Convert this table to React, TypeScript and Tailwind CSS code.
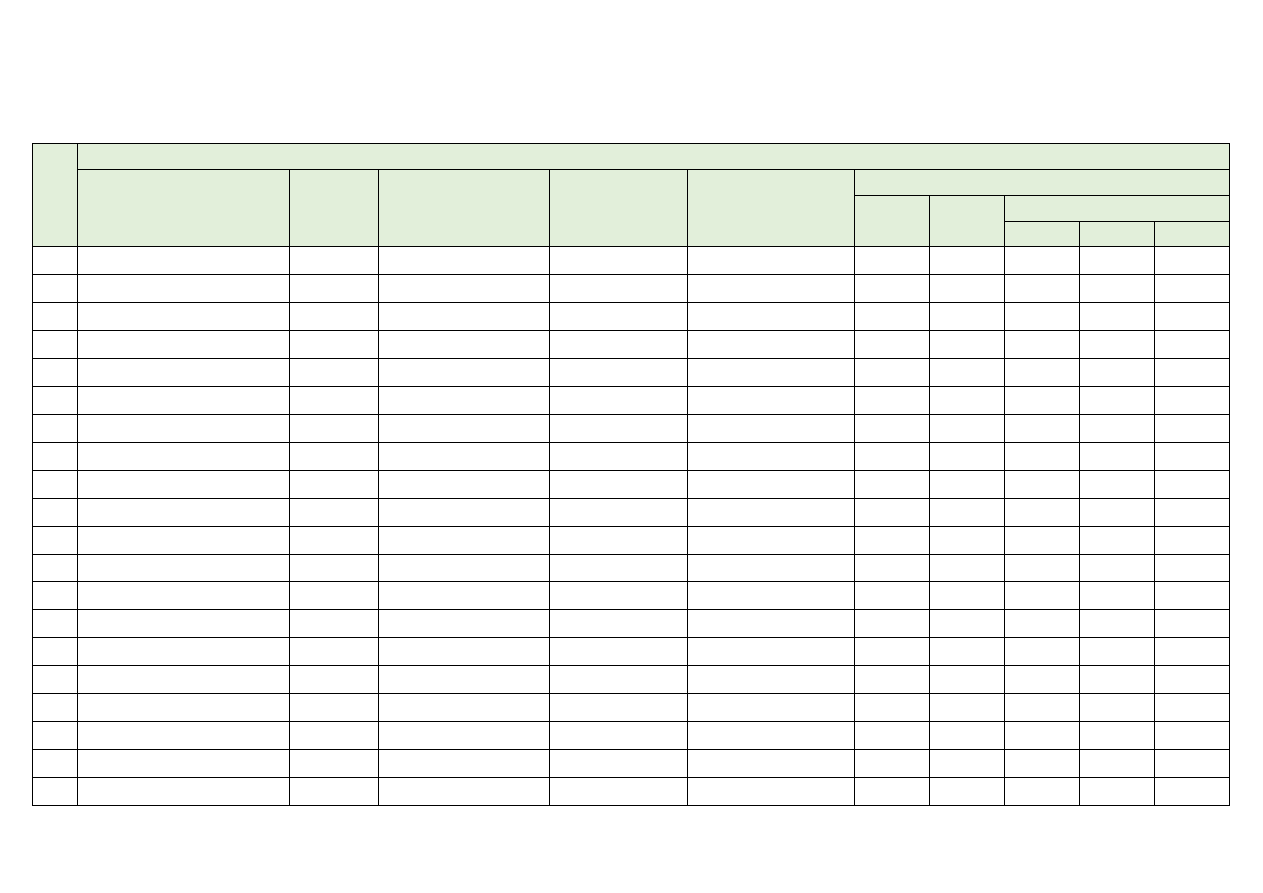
const COL_WIDTHS = [45, 212, 89, 171, 138, 167, 75, 75, 75, 75, 75];
// body rows are 28px except one that is 27px (sheet row heights round unevenly)
const BODY_ROWS = 20;
const SHORT_ROW = 11;

const cell = 'border border-black p-0';
const head = `${cell} bg-[#e2efda]`;

export default function App() {
  return (
    <div className="min-h-[893px] bg-white pt-[143px] pl-[32px]">
      <table className="table-fixed border-collapse" style={{ width: 1197 }}>
        <colgroup>
          {COL_WIDTHS.map((w, i) => (
            <col key={i} style={{ width: w }} />
          ))}
        </colgroup>
        <thead>
          <tr className="h-[26px]">
            <th rowSpan={4} className={head} />
            <th colSpan={10} className={head} />
          </tr>
          <tr className="h-[26px]">
            <th rowSpan={3} className={head} />
            <th rowSpan={3} className={head} />
            <th rowSpan={3} className={head} />
            <th rowSpan={3} className={head} />
            <th rowSpan={3} className={head} />
            <th colSpan={5} className={head} />
          </tr>
          <tr className="h-[26px]">
            <th rowSpan={2} className={head} />
            <th rowSpan={2} className={head} />
            <th colSpan={3} className={head} />
          </tr>
          <tr className="h-[25px]">
            <th className={head} />
            <th className={head} />
            <th className={head} />
          </tr>
        </thead>
        <tbody>
          {Array.from({ length: BODY_ROWS }, (_, r) => (
            <tr key={r} className={r === SHORT_ROW ? 'h-[27px]' : 'h-[28px]'}>
              {COL_WIDTHS.map((_, c) => (
                <td key={c} className={cell} />
              ))}
            </tr>
          ))}
        </tbody>
      </table>
    </div>
  );
}
